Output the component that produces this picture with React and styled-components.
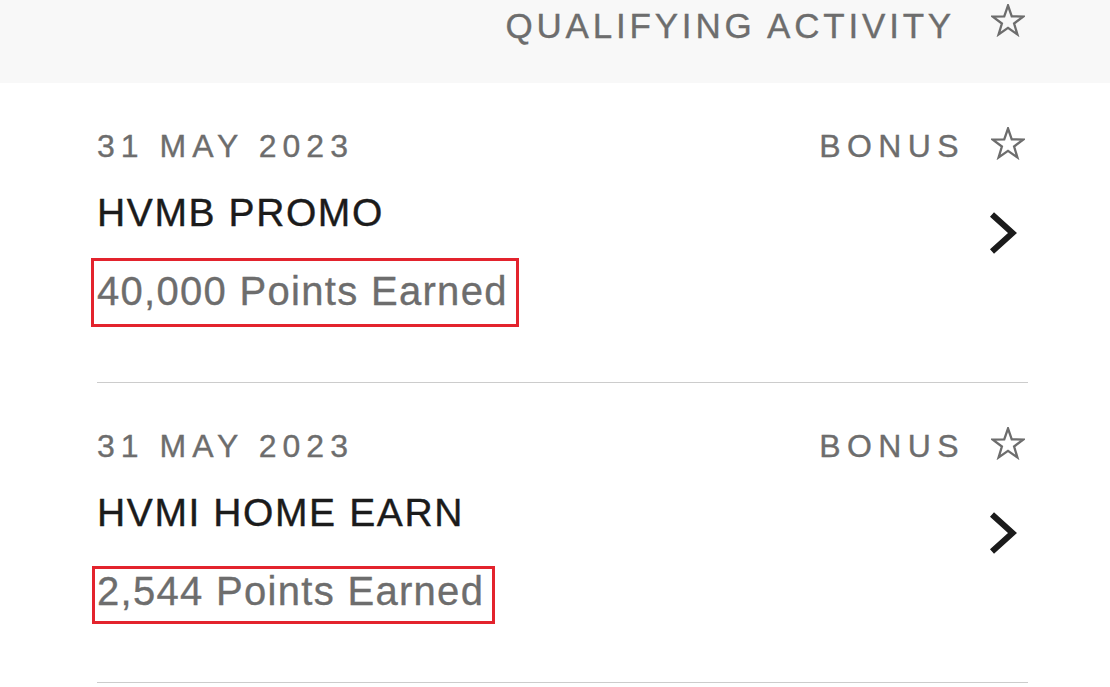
import React from "react";
import styled, { createGlobalStyle } from "styled-components";

const GlobalStyle = createGlobalStyle`
  html, body {
    margin: 0;
    padding: 0;
    background: #ffffff;
  }
  body {
    font-family: "Liberation Sans", Helvetica, Arial, sans-serif;
  }
`;

const Page = styled.div`
  width: 1110px;
  min-height: 687px;
  background: #ffffff;
  overflow: hidden;
`;

const Header = styled.header`
  height: 83px;
  box-sizing: border-box;
  background: #f8f8f8;
  display: flex;
  justify-content: flex-end;
  align-items: flex-start;
  padding: 8px 85px 0 0;
  gap: 36px;
`;

const HeaderTitle = styled.h2`
  margin: 0;
  font-size: 35px;
  line-height: 35px;
  font-weight: 400;
  letter-spacing: 3.8px;
  color: #6d6d6d;
  text-transform: uppercase;
  -webkit-text-stroke: 0.35px currentColor;
`;

const List = styled.ul`
  list-style: none;
  margin: 0;
  padding: 0;
`;

const Item = styled.li`
  margin: 0 82px 0 97px;
  padding: 47px 0 67px;
  border-bottom: 1px solid #cccccc;
  display: grid;
  grid-template-columns: 1fr auto;
  grid-template-rows: auto auto auto;
`;

const DateText = styled.div`
  grid-column: 1;
  grid-row: 1;
  font-size: 32px;
  line-height: 32px;
  letter-spacing: 6px;
  color: #6d6d6d;
  text-transform: uppercase;
  -webkit-text-stroke: 0.35px currentColor;
`;

const Tag = styled.div`
  grid-column: 2;
  grid-row: 1;
  justify-self: end;
  display: flex;
  align-items: flex-start;
  height: 32px;
  gap: 26px;
  margin-right: 3px;
  font-size: 32px;
  line-height: 32px;
  letter-spacing: 6.4px;
  color: #6d6d6d;
  text-transform: uppercase;
  -webkit-text-stroke: 0.35px currentColor;
`;

const StarIcon = styled.svg`
  flex: none;
  width: 34px;
  height: 33px;
  margin-top: ${(p) => p.$offset}px;
  color: #6d6d6d;
`;

const Title = styled.div`
  grid-column: 1;
  grid-row: 2;
  margin-top: 31px;
  font-size: 39px;
  line-height: 39px;
  letter-spacing: 1.6px;
  color: #1b1b1b;
  text-transform: uppercase;
  -webkit-text-stroke: 0.4px currentColor;
`;

const PointsLine = styled.div`
  grid-column: 1;
  grid-row: 3;
  justify-self: start;
  margin-top: 35px;
  font-size: 40px;
  line-height: 48px;
  letter-spacing: 1.3px;
  color: #6d6d6d;
  -webkit-text-stroke: 0.35px currentColor;
`;

const Annotated = styled.span`
  position: relative;
  display: inline-block;
`;

const Highlight = styled.span`
  position: absolute;
  top: ${(p) => p.$box.top}px;
  right: ${(p) => p.$box.right}px;
  bottom: ${(p) => p.$box.bottom}px;
  left: ${(p) => p.$box.left}px;
  border: 3px solid #e3232d;
  pointer-events: none;
`;

const Chevron = styled.svg`
  grid-column: 2;
  grid-row: 1 / span 3;
  justify-self: end;
  align-self: start;
  width: 30px;
  height: 46px;
  margin-top: 80px;
  margin-right: 9px;
  color: #1b1b1b;
`;

const Star = ({ offset = 0 }) => (
  <StarIcon $offset={offset} viewBox="0 0 34 33" aria-hidden="true">
    <path
      d="M17 1.5 L20.76 12.32 L32.22 12.56 L23.09 19.48 L26.4 30.44 L17 23.9 L7.6 30.44 L10.91 19.48 L1.78 12.56 L13.24 12.32 Z"
      fill="none"
      stroke="currentColor"
      strokeWidth="2.3"
      strokeLinejoin="miter"
    />
  </StarIcon>
);

const items = [
  {
    date: "31 May 2023",
    tag: "Bonus",
    title: "HVMB PROMO",
    points: "40,000 Points Earned",
    box: { top: -9, right: -11, bottom: -12, left: -6 },
  },
  {
    date: "31 May 2023",
    tag: "Bonus",
    title: "HVMI HOME EARN",
    points: "2,544 Points Earned",
    box: { top: -1, right: -11, bottom: -9, left: -5 },
  },
];

export default function App() {
  return (
    <Page>
      <GlobalStyle />
      <Header>
        <HeaderTitle>Qualifying Activity</HeaderTitle>
        <Star offset={-4.5} />
      </Header>
      <List>
        {items.map((it, i) => (
          <Item key={i}>
            <DateText>{it.date}</DateText>
            <Tag>
              <span>{it.tag}</span>
              <Star offset={-3.5} />
            </Tag>
            <Title>{it.title}</Title>
            <PointsLine>
              <Annotated>
                {it.points}
                <Highlight $box={it.box} />
              </Annotated>
            </PointsLine>
            <Chevron viewBox="0 0 30 46" aria-hidden="true">
              <polyline
                points="3,4.5 23.5,23 3,41.5"
                fill="none"
                stroke="currentColor"
                strokeWidth="6"
                strokeLinejoin="miter"
              />
            </Chevron>
          </Item>
        ))}
      </List>
    </Page>
  );
}
